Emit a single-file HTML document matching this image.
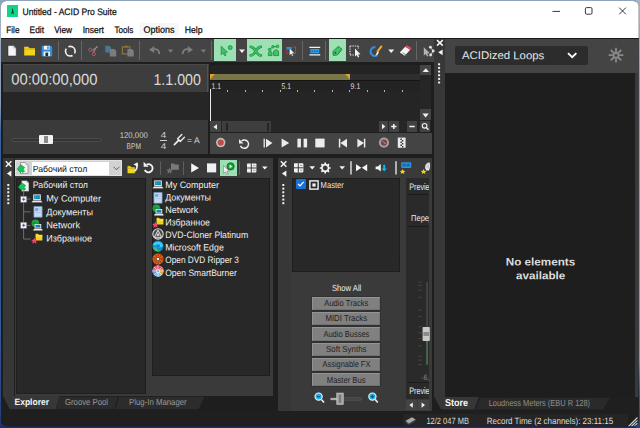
<!DOCTYPE html>
<html lang="en"><head><meta charset="utf-8"><title>Untitled - ACID Pro Suite</title>
<style>
html,body{margin:0;padding:0;}
body{width:640px;height:428px;overflow:hidden;background:#1e1e1e;font-family:"Liberation Sans","DejaVu Sans",sans-serif;}
#app{position:relative;width:640px;height:428px;overflow:hidden;background:linear-gradient(#a0b0c4,#8a9cb4 24%,#3a62a0 31%,#2c5590 48%,#34589a 78%,#26407c 97%,#1c2c6c);}
#app div,#app svg,#app span.t{position:absolute;}
#app span.t{left:0;top:0;white-space:nowrap;transform-origin:0 0;display:block;}
</style></head><body><div id="app">
<div style="left:0px;top:0px;width:640px;height:40px;background:linear-gradient(#8fa3bb,#a9b8c8);"></div>
<div style="left:636px;top:0px;width:4px;height:428px;background:linear-gradient(#a4b4c6,#8a9aac 20%,#8292a4 84%,#3a5a90 91%,#2a3f78);"></div>
<div id="win" style="left:0;top:0;width:640px;height:428px;clip-path:inset(1px 1.3px 1.7px 1px round 5.5px 5.5px 6px 6px);background:#1e1e1e">
<div style="left:0px;top:0px;width:640px;height:37.5px;background:#ffffff;"></div>
<div style="left:138.8px;top:23px;width:40.2px;height:13px;background:#f7f7f7;border-radius:2px;"></div>
<div style="left:7px;top:5.2px;width:11.2px;height:12px;background:#10d488;"></div>
<svg style="left:7px;top:5.2px;" width="11.2" height="12" viewBox="0 0 11.2 12"><path d="M5.6 2.6 L4.2 9.6 L5.6 8 L7 9.6 Z" fill="#0a3a2a"/></svg>
<span class="t" style="font-size:9.4px;line-height:9.4px;color:#111;transform:translate(22.50px,6.80px) rotate(0.03deg) scaleX(0.9126);-webkit-text-stroke:0.25px #111;">Untitled - ACID Pro Suite</span>
<svg style="left:540px;top:0px;" width="100" height="24" viewBox="0 0 100 24"><path d="M12.5 11.4h7.5" stroke="#222" stroke-width="0.9" fill="none"/><rect x="45.4" y="7.6" width="6.6" height="6.6" rx="1.2" stroke="#222" stroke-width="0.9" fill="none"/><path d="M79.200 7.600l6.700 6.700M85.900 7.600l-6.700 6.700" stroke="#222" stroke-width="0.9" fill="none"/></svg>
<span class="t" style="font-size:9.3px;line-height:9.3px;color:#111;transform:translate(6.20px,25.80px) rotate(0.03deg) scaleX(0.8875);-webkit-text-stroke:0.25px #111;">File</span>
<span class="t" style="font-size:9.3px;line-height:9.3px;color:#111;transform:translate(29.60px,25.80px) rotate(0.03deg) scaleX(0.8986);-webkit-text-stroke:0.25px #111;">Edit</span>
<span class="t" style="font-size:9.3px;line-height:9.3px;color:#111;transform:translate(54.20px,25.80px) rotate(0.03deg) scaleX(0.8904);-webkit-text-stroke:0.25px #111;">View</span>
<span class="t" style="font-size:9.3px;line-height:9.3px;color:#111;transform:translate(82.70px,25.80px) rotate(0.03deg) scaleX(0.9158);-webkit-text-stroke:0.25px #111;">Insert</span>
<span class="t" style="font-size:9.3px;line-height:9.3px;color:#111;transform:translate(114.40px,25.80px) rotate(0.03deg) scaleX(0.8751);-webkit-text-stroke:0.25px #111;">Tools</span>
<span class="t" style="font-size:9.3px;line-height:9.3px;color:#111;transform:translate(143.50px,25.80px) rotate(0.03deg) scaleX(0.9672);-webkit-text-stroke:0.25px #111;">Options</span>
<span class="t" style="font-size:9.3px;line-height:9.3px;color:#111;transform:translate(184.80px,25.80px) rotate(0.03deg) scaleX(0.9306);-webkit-text-stroke:0.25px #111;">Help</span>
<div style="left:0px;top:37.5px;width:640px;height:1.5px;background:#1a1a1a;"></div>
<div style="left:0px;top:39px;width:434.5px;height:23.4px;background:#444444;"></div>
<div style="left:214px;top:39.3px;width:22px;height:21.6px;background:#9de0b3;"></div>
<div style="left:247px;top:39.3px;width:35px;height:21.6px;background:#9de0b3;"></div>
<div style="left:328.7px;top:39.3px;width:17.4px;height:21.6px;background:#9de0b3;"></div>
<div style="left:58.0px;top:41.3px;width:1px;height:18.8px;background:#666;"></div>
<div style="left:80.9px;top:41.3px;width:1px;height:18.8px;background:#666;"></div>
<div style="left:138.9px;top:41.3px;width:1px;height:18.8px;background:#666;"></div>
<div style="left:211.0px;top:41.3px;width:1px;height:18.8px;background:#666;"></div>
<div style="left:302.0px;top:41.3px;width:1px;height:18.8px;background:#666;"></div>
<div style="left:325.0px;top:41.3px;width:1px;height:18.8px;background:#666;"></div>
<div style="left:415.8px;top:41.3px;width:1px;height:18.8px;background:#666;"></div>
<div style="left:434.2px;top:39px;width:11.1px;height:358px;background:#373737;"></div>
<div style="left:445.3px;top:39px;width:193.2px;height:33.7px;background:#444444;"></div>
<div style="left:455px;top:46.3px;width:132.8px;height:18.3px;background:#2c2c2c;border-radius:2px;"></div>
<span class="t" style="font-size:11.2px;line-height:11.2px;color:#e6e6e6;transform:translate(462.00px,50.10px) rotate(0.03deg) scaleX(1.0181);">ACIDized Loops</span>
<svg style="left:566px;top:50.3px;" width="12" height="10" viewBox="0 0 12 10"><path d="M2 3.2l4.2 4 4.2-4" stroke="#fff" stroke-width="1.8" fill="none"/></svg>
<svg style="left:607px;top:47px;" width="18" height="18" viewBox="0 0 18 18"><g transform="translate(9 8.2)" stroke="#8a8a8a" fill="none"><circle r="2.500" stroke-width="1.900"/><path d="M0-7.400v4.200M0 7.400v-4.200M-7.400 0h4.200M7.400 0h-4.200M-5.200-5.200l2.900 2.900M5.200 5.200l-2.900-2.900M-5.200 5.200l2.900-2.900M5.200-5.200l-2.900 2.900" stroke-width="1.800"/></g></svg>
<div style="left:445.3px;top:72.7px;width:190.2px;height:324px;background:#1e1e1e;"></div>
<div style="left:634.9px;top:72.7px;width:2.9px;height:324px;background:#393939;"></div>
<span class="t" style="font-size:10.9px;line-height:10.9px;color:#dcdcdc;font-weight:bold;transform:translate(505.70px,256.50px) rotate(0.03deg) scaleX(1.0738);">No elements</span>
<span class="t" style="font-size:10.9px;line-height:10.9px;color:#dcdcdc;font-weight:bold;transform:translate(516.00px,270.30px) rotate(0.03deg) scaleX(1.0726);">available</span>
<div style="left:2.7px;top:64.4px;width:206.3px;height:27.3px;background:#3d3d3d;box-shadow:inset 0 1px 0 #484848;"></div>
<div style="left:207.2px;top:65px;width:1px;height:26.7px;background:#525252;"></div>
<div style="left:2.7px;top:91.7px;width:206.2px;height:28.5px;background:#262626;"></div>
<div style="left:210px;top:92.4px;width:209.6px;height:29px;background:#252525;"></div>
<span class="t" style="font-size:15.7px;line-height:15.7px;color:#dadada;transform:translate(11.20px,71.60px) rotate(0.03deg) scaleX(0.9425);">00:00:00,000</span>
<span class="t" style="font-size:15.7px;line-height:15.7px;color:#dadada;transform:translate(153.40px,71.50px) rotate(0.03deg) scaleX(0.9087);">1.1.000</span>
<div style="left:209.8px;top:64.6px;width:209.8px;height:9.2px;background:#242424;"></div>
<div style="left:209.8px;top:73.8px;width:209.8px;height:6.3px;background:#2e2e2e;"></div>
<div style="left:209.8px;top:73.7px;width:139.8px;height:6.2px;background:#79774a;"></div>
<div style="left:209.8px;top:79.9px;width:209.8px;height:0.9px;background:#151515;"></div>
<div style="left:209.8px;top:80.8px;width:209.8px;height:11.6px;background:#232323;"></div>
<svg style="left:209.8px;top:73.8px;" width="6" height="6.4" viewBox="0 0 6 6.4"><path d="M0 0h5L0 5.4z" fill="#e0a030"/></svg>
<svg style="left:343.6px;top:73.8px;" width="6" height="6.4" viewBox="0 0 6 6.4"><path d="M1 0h5v5.4z" fill="#e0a030"/></svg>
<div style="left:209.8px;top:89.8px;width:1px;height:2px;background:#b4b4b4;"></div>
<div style="left:227.24px;top:89.8px;width:1px;height:2px;background:#b4b4b4;"></div>
<div style="left:244.68px;top:89.8px;width:1px;height:2px;background:#b4b4b4;"></div>
<div style="left:262.12px;top:89.8px;width:1px;height:2px;background:#b4b4b4;"></div>
<div style="left:279.56px;top:89.8px;width:1px;height:2px;background:#b4b4b4;"></div>
<div style="left:297.0px;top:89.8px;width:1px;height:2px;background:#b4b4b4;"></div>
<div style="left:314.44000000000005px;top:89.8px;width:1px;height:2px;background:#b4b4b4;"></div>
<div style="left:331.88px;top:89.8px;width:1px;height:2px;background:#b4b4b4;"></div>
<div style="left:349.32000000000005px;top:89.8px;width:1px;height:2px;background:#b4b4b4;"></div>
<div style="left:366.76px;top:89.8px;width:1px;height:2px;background:#b4b4b4;"></div>
<div style="left:384.20000000000005px;top:89.8px;width:1px;height:2px;background:#b4b4b4;"></div>
<div style="left:401.64px;top:89.8px;width:1px;height:2px;background:#b4b4b4;"></div>
<span class="t" style="font-size:8.2px;line-height:8.2px;color:#dcdcdc;transform:translate(211.50px,82.70px) rotate(0.03deg) scaleX(0.8334);">1.1</span>
<span class="t" style="font-size:8.2px;line-height:8.2px;color:#dcdcdc;transform:translate(281.60px,82.70px) rotate(0.03deg) scaleX(0.8246);">5.1</span>
<span class="t" style="font-size:8.2px;line-height:8.2px;color:#dcdcdc;transform:translate(350.60px,82.70px) rotate(0.03deg) scaleX(0.8509);">9.1</span>
<div style="left:209.9px;top:89.4px;width:1.2px;height:31.2px;background:#ececec;"></div>
<div style="left:420.2px;top:64.6px;width:10.8px;height:56px;background:#262626;"></div>
<div style="left:420.2px;top:64.8px;width:10.8px;height:10.4px;background:#444;"></div>
<div style="left:420.2px;top:109.4px;width:10.8px;height:10.8px;background:#444;"></div>
<svg style="left:420.3px;top:65.3px;" width="11.5" height="10" viewBox="0 0 11.5 10"><path d="M2.6 7h6.4L5.8 3.200z" fill="#f0f0f0"/></svg>
<svg style="left:420.3px;top:109.6px;" width="11" height="10.4" viewBox="0 0 11 10.4"><path d="M2.4 3.600h6.400L5.600 7.400z" fill="#f0f0f0"/></svg>
<div style="left:2.7px;top:120.2px;width:205.8px;height:33.8px;background:#3a3a3a;"></div>
<div style="left:12px;top:138.5px;width:89px;height:2.2px;background:#343434;box-shadow:0 0 0 0.6px #5c5c5c;border-radius:1px;"></div>
<div style="left:39px;top:134.7px;width:13.5px;height:9.6px;background:#f2f2f2;border-radius:1px;"></div>
<div style="left:43.6px;top:136.1px;width:4.4px;height:6.8px;background:#8a8a8a;"></div>
<span class="t" style="font-size:8.3px;line-height:8.3px;color:#d0d0d0;transform:translate(119.70px,131.00px) rotate(0.03deg) scaleX(0.9366);">120,000</span>
<span class="t" style="font-size:8.3px;line-height:8.3px;color:#d0d0d0;transform:translate(126.60px,141.90px) rotate(0.03deg) scaleX(0.7950);">BPM</span>
<span class="t" style="font-size:8.2px;line-height:8.2px;color:#d0d0d0;transform:translate(160.80px,131.70px) rotate(0.03deg) scaleX(1.2060);">4</span>
<span class="t" style="font-size:8.2px;line-height:8.2px;color:#d0d0d0;transform:translate(160.80px,143.00px) rotate(0.03deg) scaleX(1.2060);">4</span>
<div style="left:160px;top:140px;width:7px;height:0.9px;background:#d0d0d0;"></div>
<span class="t" style="font-size:8.8px;line-height:8.8px;color:#d8d8d8;transform:translate(187.00px,136.20px) rotate(0.03deg) scaleX(0.9716);">= A</span>
<svg style="left:173px;top:133.4px;" width="13" height="13" viewBox="0 0 13 13"><path d="M1.400 11.600L5.800 7.200" stroke="#ececec" stroke-width="1.700" fill="none" stroke-linecap="round"/><path d="M8.800 1.600L4.600 5.800l2.600 2.600 4.200-4.200" stroke="#ececec" stroke-width="1.400" fill="none" stroke-linecap="round" stroke-linejoin="round"/></svg>
<div style="left:210px;top:121.2px;width:221px;height:11.3px;background:#262626;"></div>
<div style="left:210.2px;top:121.2px;width:10.5px;height:10.8px;background:#444;"></div>
<div style="left:222px;top:121.2px;width:49px;height:10.8px;background:#3e3e3e;"></div>
<div style="left:226px;top:122.9px;width:1.8px;height:8px;background:#252525;"></div>
<div style="left:267px;top:122.9px;width:1.8px;height:8px;background:#252525;"></div>
<svg style="left:210px;top:121.2px;" width="10.6" height="11.4" viewBox="0 0 10.6 11.4"><path d="M7 3.200v5.400L3.400 5.900z" fill="#f0f0f0"/></svg>
<div style="left:379px;top:121.2px;width:8.6px;height:10.8px;background:#424242;"></div>
<div style="left:389.4px;top:121.2px;width:9.2px;height:10.8px;background:#424242;"></div>
<div style="left:407.3px;top:121.2px;width:9.899999999999999px;height:10.8px;background:#424242;"></div>
<div style="left:419.9px;top:121.2px;width:10.2px;height:10.8px;background:#424242;"></div>
<svg style="left:379px;top:121.4px;" width="9" height="11" viewBox="0 0 9 11"><path d="M3 2.800v5.400l3.400-2.700z" fill="#f0f0f0"/></svg>
<svg style="left:389.4px;top:121.4px;" width="10" height="11" viewBox="0 0 10 11"><path d="M2.200 5.500h5.200M4.800 2.900v5.200" stroke="#f0f0f0" stroke-width="1.5"/></svg>
<svg style="left:407.3px;top:121.4px;" width="10" height="11" viewBox="0 0 10 11"><path d="M2.400 5.500h5.400" stroke="#f0f0f0" stroke-width="1.5"/></svg>
<svg style="left:419.9px;top:121.4px;" width="11" height="11" viewBox="0 0 11 11"><circle cx="4.600" cy="4.800" r="2.300" stroke="#f0f0f0" stroke-width="1.100" fill="none"/><path d="M6.300 6.500l2.200 2.200" stroke="#f0f0f0" stroke-width="1.400"/></svg>
<div style="left:210px;top:133px;width:221.5px;height:20.8px;background:#444444;"></div>
<svg style="left:210px;top:133.2px;" width="221" height="20.6" viewBox="0 0 221 20.6">
<circle cx="10.7" cy="9.600" r="3.900" fill="#bc4c4a" stroke="#bcbcbc" stroke-width="1.700"/>
<path d="M31.500 8a4.200 4.200 0 1 1 -1 4.900" stroke="#ececec" stroke-width="1.500" fill="none"/><path d="M29 6v4.400h4.400z" fill="#ececec"/>
<path d="M54.200 5.800v8.800" stroke="#ececec" stroke-width="1.300"/><path d="M56 5.800v8.600l6.400-4.300z" fill="#ececec"/>
<path d="M71.600 5.600v8.900l7.600-4.450z" fill="#ececec"/>
<rect x="87.400" y="5.700" width="3.500" height="8.700" fill="#ececec"/><rect x="93.600" y="5.700" width="3.500" height="8.700" fill="#ececec"/>
<rect x="105.300" y="5.600" width="9.300" height="8.800" fill="#ececec"/>
<path d="M129.600 5.800v8.600" stroke="#ececec" stroke-width="1.500"/><path d="M137 5.800v8.600l-6.600-4.300z" fill="#ececec"/>
<path d="M154.600 5.800v8.600" stroke="#ececec" stroke-width="1.500"/><path d="M147.400 5.800v8.600l6.600-4.300z" fill="#ececec"/>
<circle cx="174" cy="9.600" r="4.100" fill="#7a4444" stroke="#a0a0a0" stroke-width="2"/><path d="M174 9.600l-1.600-1.800M174 9.600l1.800 1" stroke="#c4aaaa" stroke-width="0.800"/>
<rect x="187.800" y="4.600" width="7.800" height="10.200" fill="#ececec"/><path d="M190.400 5.400h1.500v1.500h-1.500zM191.900 6.900h1.500v1.500h-1.500zM190.400 8.400h1.500v1.500h-1.500zM191.900 9.900h1.500v1.500h-1.500zM190.400 11.400h1.500v1.500h-1.500zM191.900 12.900h1.500v1.500h-1.500z" fill="#333"/>
</svg>
<div style="left:3.2px;top:157.5px;width:11.3px;height:239px;background:#373737;"></div>
<div style="left:14.5px;top:157.5px;width:258.8px;height:238.8px;background:#3a3a3a;"></div>
<svg style="left:2.8px;top:157.5px;" width="12" height="60" viewBox="0 0 12 60"><path d="M2.800 3.300l5.600 5.400M8.400 3.300l-5.600 5.400" stroke="#f4f4f4" stroke-width="1.500"/><path d="M8.400 12.500v6.200L3.900 15.600z" fill="#f4f4f4"/><rect x="4.300" y="26.00" width="2" height="2" fill="#f0f0f0"/><rect x="4.300" y="29.64" width="2" height="2" fill="#f0f0f0"/><rect x="4.300" y="33.28" width="2" height="2" fill="#f0f0f0"/><rect x="4.300" y="36.92" width="2" height="2" fill="#f0f0f0"/><rect x="4.300" y="40.56" width="2" height="2" fill="#f0f0f0"/><rect x="4.300" y="44.20" width="2" height="2" fill="#f0f0f0"/></svg>
<div style="left:15px;top:160px;width:106.9px;height:16.1px;background:#d2d2d2;border-radius:1px;box-shadow:inset 0 0 0 0.8px #e6e6e6;"></div>
<div style="left:31.5px;top:162.3px;width:77.8px;height:12.3px;background:#ffffff;"></div>
<span class="t" style="font-size:8.9px;line-height:8.9px;color:#111;transform:translate(32.70px,164.90px) rotate(0.03deg) scaleX(0.9809);">Рабочий стол</span>
<svg style="left:110px;top:162.4px;" width="12" height="12" viewBox="0 0 12 12"><path d="M3.600 4.800l2.900 3 2.900-3" stroke="#555" stroke-width="0.900" fill="none"/></svg>
<svg style="left:17.2px;top:162.2px;" width="12" height="12" viewBox="0 0 12 12"><path d="M3.400 0.600h5.200l2.400 2.400v8.400H3.400z" fill="#f4f4f4" stroke="#555" stroke-width="0.500"/><path d="M8.600 0.600v2.400h2.400z" fill="#bdbdbd"/><path d="M3.800 2.800l3.800 2.600-1.400 2 1.400 1.800-2 1.200-1.200-1.200-1 1.200L0.200 7z" fill="#14c858" stroke="#0a7a30" stroke-width="0.500"/></svg>
<svg style="left:126px;top:159.6px;" width="150" height="16" viewBox="0 0 150 16">
<path d="M1.200 5.800h3.400l.8 1.200h3.800v6.600H1.200z" fill="#f2d41a" stroke="#2a2a2a" stroke-width="0.500"/><path d="M1.200 8.400h8" stroke="#b89a10" stroke-width="0.600"/>
<path d="M8.600 11c2.400-1.600 2.800-4.400 1.600-6.600" stroke="#f4f4f4" stroke-width="1.600" fill="none"/><path d="M7.400 4.600l4.200-2.400.6 4.400z" fill="#f4f4f4"/>
<path d="M20.600 4.600a4.100 4.100 0 1 1 -1.800 5.400" stroke="#f4f4f4" stroke-width="1.800" fill="none"/><path d="M17.600 1.800v5h5z" fill="#f4f4f4"/>
<path d="M34.500 1.400v13.500M57.500 1.400v13.500M113.500 1.400v13.500" stroke="#5e5e5e" stroke-width="1"/>
<path d="M45 3.400h3l.8 1h4v5.400H45z" fill="#7a7a7a"/><path d="M43.600 7.400l1 2.200 2.400.2-1.800 1.600.6 2.400-2.200-1.300-2.200 1.300.6-2.400-1.800-1.600 2.400-.2z" fill="#6e6e6e"/>
<path d="M65.200 3.200v9.400l7.800-4.700z" fill="#f4f4f4"/>
<rect x="81" y="3.400" width="9.200" height="9" fill="#f0f0f0"/>
<rect x="121" y="3.400" width="9.400" height="9.200" rx="0.800" fill="#f0f0f0"/><path d="M125.300 3.400v9.200M121 8h9.400" stroke="#3a3a3a" stroke-width="1"/><path d="M127 5.700h2.400M127 10.300h2.400" stroke="#777" stroke-width="0.700"/>
<path d="M136 6.400h5.600l-2.800 3.200z" fill="#f4f4f4"/>
</svg>
<div style="left:219.7px;top:159.6px;width:17.3px;height:16.8px;background:#9de0b3;"></div>
<svg style="left:219.7px;top:159.8px;" width="17.3" height="16.5" viewBox="0 0 17.3 16.5"><circle cx="10.600" cy="6.400" r="3.600" fill="#1fa03e" stroke="#0c5a22" stroke-width="0.800"/><path d="M9.600 4.600v3.600l2.800-1.800z" fill="#e8ffe8"/><path d="M3.400 5.400v8l2-1.600 1.200 2.600 1.400-.6-1.200-2.600 2.600-.2z" fill="#f2f2f2" stroke="#666" stroke-width="0.500"/></svg>
<div style="left:15.5px;top:178px;width:130.3px;height:216.2px;background:#282828;box-shadow:inset 0 0 0 0.8px #1c1c1c;"></div>
<div style="left:151.9px;top:178px;width:118.2px;height:197.8px;background:#282828;box-shadow:inset 0 0 0 0.8px #1c1c1c;"></div>
<svg style="left:17.6px;top:179.6px;" width="12" height="12" viewBox="0 0 12 12"><path d="M3.400 0.600h5.200l2.400 2.400v8.400H3.400z" fill="#f4f4f4" stroke="#222" stroke-width="0.500"/><path d="M8.600 0.600v2.400h2.400z" fill="#bdbdbd"/><path d="M3.800 2.800l3.800 2.600-1.400 2 1.400 1.800-2 1.200-1.200-1.200-1 1.200L0.200 7z" fill="#14c858" stroke="#0a7a30" stroke-width="0.500"/></svg>
<span class="t" style="font-size:9.3px;line-height:9.3px;color:#efefef;transform:translate(32.80px,180.90px) rotate(0.03deg) scaleX(0.9455);">Рабочий стол</span>
<svg style="left:16px;top:188px;" width="20" height="56" viewBox="0 0 20 56"><path d="M7.600 3v48M7.600 11h7M7.600 23.800h7M7.600 37.400h7M7.600 51h7" stroke="#7e7e7e" stroke-width="0.800" fill="none"/><rect x="4.700" y="8.300" width="6" height="6" fill="#f4f4f4" stroke="#777" stroke-width="0.500"/><path d="M6.100 11.300h3.200M7.700 9.700v3.200" stroke="#2a4ab0" stroke-width="0.900"/><rect x="4.700" y="34.300" width="6" height="6" fill="#f4f4f4" stroke="#777" stroke-width="0.500"/><path d="M6.100 37.300h3.200M7.700 35.700v3.200" stroke="#2a4ab0" stroke-width="0.900"/></svg>
<svg style="left:31.4px;top:192.6px;" width="12" height="12" viewBox="0 0 12 12"><rect x="2.200" y="1.400" width="7.600" height="5.600" fill="#e8e8e8"/><rect x="3.100" y="2.300" width="5.800" height="3.800" fill="#0e86b4"/><path d="M4.400 2.300v3.800M3.100 4.200h5.800" stroke="#2ac0e8" stroke-width="0.500"/><path d="M2 7.400h8l1.400 1.800H0.600z" fill="#f0f0f0"/><path d="M0.600 9.400h10.800" stroke="#888" stroke-width="0.500"/></svg>
<span class="t" style="font-size:9.3px;line-height:9.3px;color:#efefef;transform:translate(46.20px,194.60px) rotate(0.03deg) scaleX(0.9818);">My Computer</span>
<svg style="left:31.6px;top:206px;" width="12" height="12" viewBox="0 0 12 12"><rect x="1.600" y="0.200" width="8.800" height="11.400" rx="0.600" fill="#8fb2dc"/><rect x="2.500" y="1.100" width="7" height="9.600" fill="#c8daf0"/><rect x="3.200" y="2" width="3" height="3" fill="#7fa4d4"/><path d="M6.800 2.600h2.200M6.800 4.200h2.200M3.400 6.600h5.400" stroke="#9fbce0" stroke-width="0.700"/></svg>
<span class="t" style="font-size:9.3px;line-height:9.3px;color:#efefef;transform:translate(46.20px,208.20px) rotate(0.03deg) scaleX(0.9762);">Документы</span>
<svg style="left:31px;top:219.2px;" width="12" height="12" viewBox="0 0 12 12"><circle cx="4.400" cy="4.200" r="3.800" fill="#22aa44"/><path d="M0.800 4.200h7.200M4.400 0.600c-2 2-2 5.200 0 7.200" stroke="#127a2c" stroke-width="0.600" fill="none"/><rect x="3.600" y="5" width="6.600" height="4.400" fill="#e8e8e8"/><rect x="4.500" y="5.800" width="4.800" height="2.800" fill="#0e86b4"/><path d="M3 9.800h7.800l1 1.600H2z" fill="#f0f0f0"/></svg>
<span class="t" style="font-size:9.3px;line-height:9.3px;color:#efefef;transform:translate(46.20px,221.20px) rotate(0.03deg) scaleX(0.9910);">Network</span>
<svg style="left:31.2px;top:232.6px;" width="12" height="12" viewBox="0 0 12 12"><path d="M4.600 0.800h2.400l.8 1h3.600v5.800H4.600z" fill="#f2d41a"/><path d="M4.600 3h6.800" stroke="#fff08a" stroke-width="0.700"/><path d="M3.400 4.600l1 2.100 2.300.2-1.700 1.600.5 2.300-2.100-1.200-2.100 1.200.5-2.300L0.100 6.900l2.300-.2z" fill="#e8486a"/></svg>
<span class="t" style="font-size:9.3px;line-height:9.3px;color:#efefef;transform:translate(46.20px,234.60px) rotate(0.03deg) scaleX(0.9717);">Избранное</span>
<span class="t" style="font-size:9.3px;line-height:9.3px;color:#efefef;transform:translate(165.20px,181.10px) rotate(0.03deg) scaleX(0.9639);">My Computer</span>
<svg style="left:152.2px;top:179.29999999999998px;" width="12" height="12" viewBox="0 0 12 12"><rect x="2.200" y="1.400" width="7.600" height="5.600" fill="#e8e8e8"/><rect x="3.100" y="2.300" width="5.800" height="3.800" fill="#0e86b4"/><path d="M4.400 2.300v3.800M3.100 4.200h5.800" stroke="#2ac0e8" stroke-width="0.500"/><path d="M2 7.400h8l1.400 1.800H0.600z" fill="#f0f0f0"/><path d="M0.600 9.400h10.800" stroke="#888" stroke-width="0.500"/></svg>
<span class="t" style="font-size:9.3px;line-height:9.3px;color:#efefef;transform:translate(165.20px,193.59px) rotate(0.03deg) scaleX(0.9553);">Документы</span>
<svg style="left:152.2px;top:191.79px;" width="12" height="12" viewBox="0 0 12 12"><rect x="1.600" y="0.200" width="8.800" height="11.400" rx="0.600" fill="#8fb2dc"/><rect x="2.500" y="1.100" width="7" height="9.600" fill="#c8daf0"/><rect x="3.200" y="2" width="3" height="3" fill="#7fa4d4"/><path d="M6.800 2.600h2.200M6.800 4.200h2.200M3.400 6.600h5.400" stroke="#9fbce0" stroke-width="0.700"/></svg>
<span class="t" style="font-size:9.3px;line-height:9.3px;color:#efefef;transform:translate(165.20px,206.08px) rotate(0.03deg) scaleX(0.9675);">Network</span>
<svg style="left:152.2px;top:204.27999999999997px;" width="12" height="12" viewBox="0 0 12 12"><circle cx="4.400" cy="4.200" r="3.800" fill="#22aa44"/><path d="M0.800 4.200h7.200M4.400 0.600c-2 2-2 5.200 0 7.200" stroke="#127a2c" stroke-width="0.600" fill="none"/><rect x="3.600" y="5" width="6.600" height="4.400" fill="#e8e8e8"/><rect x="4.500" y="5.800" width="4.800" height="2.800" fill="#0e86b4"/><path d="M3 9.800h7.800l1 1.600H2z" fill="#f0f0f0"/></svg>
<span class="t" style="font-size:9.3px;line-height:9.3px;color:#efefef;transform:translate(165.20px,218.57px) rotate(0.03deg) scaleX(0.9505);">Избранное</span>
<svg style="left:152.2px;top:216.76999999999998px;" width="12" height="12" viewBox="0 0 12 12"><path d="M4.600 0.800h2.400l.8 1h3.600v5.800H4.600z" fill="#f2d41a"/><path d="M4.600 3h6.800" stroke="#fff08a" stroke-width="0.700"/><path d="M3.400 4.600l1 2.100 2.300.2-1.700 1.600.5 2.300-2.100-1.200-2.100 1.200.5-2.300L0.100 6.900l2.300-.2z" fill="#e8486a"/></svg>
<span class="t" style="font-size:9.3px;line-height:9.3px;color:#efefef;transform:translate(165.20px,231.06px) rotate(0.03deg) scaleX(0.9336);">DVD-Cloner Platinum</span>
<svg style="left:152.2px;top:227.96px;" width="12" height="12" viewBox="0 0 12 12"><circle cx="6" cy="6" r="5.200" fill="#484848" stroke="#d8d8d8" stroke-width="1.100"/><path d="M6 2L2.400 9.200c2 1 5.200 1 7.200 0z" fill="#6a6a6a" stroke="#ececec" stroke-width="0.900"/><circle cx="6" cy="6.800" r="1.200" fill="#d0d0d0"/></svg>
<span class="t" style="font-size:9.3px;line-height:9.3px;color:#efefef;transform:translate(165.20px,243.55px) rotate(0.03deg) scaleX(0.9447);">Microsoft Edge</span>
<svg style="left:152.2px;top:240.45000000000002px;" width="12" height="12" viewBox="0 0 12 12"><circle cx="6" cy="6" r="5.500" fill="#1488d8"/><path d="M0.800 7.600a5.400 5.400 0 0 0 8.600 2.600c-3 .8-5.200-1-4.800-3.200z" fill="#35c46a"/><path d="M3.400 6.200c.2-2 3.600-2.600 4.600-.6.400 1.200-.8 1.800-1.600 1.600 1 .8 4 .4 4.600-1.600A5.500 5.500 0 0 0 .6 5.400c.8-.6 2-.4 2.800.8z" fill="#3ad0f0"/></svg>
<span class="t" style="font-size:9.3px;line-height:9.3px;color:#efefef;transform:translate(165.20px,256.04px) rotate(0.03deg) scaleX(0.8923);">Open DVD Ripper 3</span>
<svg style="left:152.2px;top:252.93999999999997px;" width="12" height="12" viewBox="0 0 12 12"><circle cx="6" cy="6" r="5.500" fill="#e8681a"/><circle cx="6" cy="6" r="3.600" fill="none" stroke="#a83c0c" stroke-width="2.400" stroke-dasharray="1.300 1"/><circle cx="6" cy="6" r="1.700" fill="#f4f4f4" stroke="#5a2408" stroke-width="0.700"/></svg>
<span class="t" style="font-size:9.3px;line-height:9.3px;color:#efefef;transform:translate(165.20px,268.53px) rotate(0.03deg) scaleX(0.9173);">Open SmartBurner</span>
<svg style="left:152.2px;top:265.42999999999995px;" width="12" height="12" viewBox="0 0 12 12"><circle cx="6" cy="6" r="5.500" fill="#e8e8f8"/><path d="M6 6L6 0.500A5.500 5.500 0 0 1 11 3.600z" fill="#e8486a"/><path d="M6 6L11 3.600A5.500 5.500 0 0 1 10 9.800z" fill="#f0a030"/><path d="M6 6L10 9.800A5.500 5.500 0 0 1 3 10.600z" fill="#6ad0f4"/><path d="M6 6L3 10.600A5.500 5.500 0 0 1 0.600 5z" fill="#7a8af0"/><path d="M6 6L0.600 5A5.500 5.500 0 0 1 6 0.500z" fill="#f05a8a"/><path d="M6 0.500v11M0.500 6h11M2.100 2.100l7.800 7.800M9.900 2.100l-7.800 7.800" stroke="#f4f4fa" stroke-width="0.600"/><circle cx="6" cy="6" r="1.700" fill="#fff"/><circle cx="6" cy="6" r="0.800" fill="#444"/></svg>
<svg style="left:2px;top:396px;" width="275" height="14" viewBox="0 0 275 14"><path d="M1.200 0h56.800l-4.400 13.300H7.600z" fill="#373737"/><path d="M58 0.800h58.500l-4.400 12.400H53.900z" fill="#2b2b2b"/><path d="M117 0.800h85.500l-6 12.400h-84z" fill="#2c2c2c"/><path d="M116.800 0.800l-4.200 12.400" stroke="#1e1e1e" stroke-width="1"/></svg>
<span class="t" style="font-size:9.1px;line-height:9.1px;color:#f6f6f6;font-weight:bold;transform:translate(14.50px,398.10px) rotate(0.03deg) scaleX(0.9344);">Explorer</span>
<span class="t" style="font-size:8.8px;line-height:8.8px;color:#9a9a9a;transform:translate(65.00px,398.10px) rotate(0.03deg) scaleX(0.8790);">Groove Pool</span>
<span class="t" style="font-size:8.8px;line-height:8.8px;color:#9a9a9a;transform:translate(129.00px,398.10px) rotate(0.03deg) scaleX(0.8869);">Plug-In Manager</span>
<div style="left:278px;top:157.5px;width:13px;height:253.3px;background:#373737;"></div>
<div style="left:291px;top:157.5px;width:141.3px;height:253.4px;background:#3a3a3a;"></div>
<svg style="left:278.2px;top:157.5px;" width="12" height="60" viewBox="0 0 12 60"><path d="M2.800 3.300l5.600 5.400M8.400 3.300l-5.600 5.400" stroke="#f4f4f4" stroke-width="1.500"/><path d="M8.400 12.500v6.200L3.900 15.600z" fill="#f4f4f4"/><rect x="4.300" y="26.00" width="2" height="2" fill="#f0f0f0"/><rect x="4.300" y="29.64" width="2" height="2" fill="#f0f0f0"/><rect x="4.300" y="33.28" width="2" height="2" fill="#f0f0f0"/><rect x="4.300" y="36.92" width="2" height="2" fill="#f0f0f0"/><rect x="4.300" y="40.56" width="2" height="2" fill="#f0f0f0"/><rect x="4.300" y="44.20" width="2" height="2" fill="#f0f0f0"/></svg>
<svg style="left:291px;top:159.1px;" width="140" height="17" viewBox="0 0 140 17">
<rect x="3" y="4.200" width="9.400" height="9.200" rx="0.800" fill="#f0f0f0"/><path d="M7.300 4.200v9.200M3 8.800h9.400" stroke="#3a3a3a" stroke-width="1"/><path d="M9 6.500h2.400M9 11.100h2.400" stroke="#777" stroke-width="0.700"/>
<path d="M18.400 7.200h5.600l-2.800 3.200z" fill="#f4f4f4"/>
<g transform="translate(34.200 9)"><circle r="3.300" fill="none" stroke="#f4f4f4" stroke-width="1.700"/><path d="M0-5.400v2M0 5.400v-2M-5.400 0h2M5.400 0h-2M-3.800-3.800l1.400 1.400M3.800 3.800l-1.400-1.400M-3.800 3.800l1.400-1.400M3.800-3.800l-1.400 1.400" stroke="#f4f4f4" stroke-width="1.700"/></g>
<path d="M48.400 7.200h5.600l-2.800 3.200z" fill="#f4f4f4"/>
<path d="M60 2.200v13.400M105 2.200v13.400" stroke="#d8d8d8" stroke-width="1.500"/>
<path d="M65 5.300v7l5.400-3.500zM76.200 5.300v7l-5.400-3.500z" fill="#f4f4f4"/>
<path d="M84.600 7.400h2.200l3-2.400v7.600l-3-2.400h-2.200z" fill="#f4f4f4"/><path d="M93.200 5.800v4.400" stroke="#1cb0ec" stroke-width="2"/><path d="M90.600 9.400h5.200l-2.600 3.200z" fill="#1cb0ec"/>
<rect x="110.200" y="3.300" width="10" height="5.600" rx="0.800" fill="#2a96e0"/><rect x="111.400" y="4.600" width="3.400" height="3" fill="#1a6ab0"/><rect x="115.600" y="4.600" width="3.400" height="3" fill="#1a6ab0"/><path d="M111.600 10l.9 1.700 1.900.2-1.400 1.300.4 1.900-1.800-1-1.800 1 .4-1.900-1.400-1.300 1.900-.2z" fill="#f4d020"/>
<path d="M132.600 10l.9 1.700 1.900.2-1.400 1.300.4 1.900-1.800-1-1.800 1 .4-1.900-1.400-1.300 1.900-.2z" fill="#f4d020"/><path d="M134.200 9.600c-.6-3.600 1.400-6 4.400-6 .8 2.600.6 5.400-.6 7.800l-2.600.2z" fill="#e8e8e8"/><path d="M136 5.400v4M137.400 4.800v4.400" stroke="#9a9a9a" stroke-width="0.500"/>
</svg>
<div style="left:292px;top:178.2px;width:107.6px;height:93.4px;background:#282828;box-shadow:inset 0 0 0 0.8px #1c1c1c;"></div>
<div style="left:296px;top:179.4px;width:9.5px;height:9.5px;background:#1670d8;border-radius:1px;"></div>
<svg style="left:296px;top:179.4px;" width="9.5" height="9.5" viewBox="0 0 9.5 9.5"><path d="M2 4.800l2 2 3.600-4" stroke="#fff" stroke-width="1.200" fill="none"/></svg>
<svg style="left:308.6px;top:179.6px;" width="10" height="10" viewBox="0 0 10 10"><rect x="0.900" y="0.900" width="8.200" height="8.200" fill="none" stroke="#f2f2f2" stroke-width="1.400"/><rect x="3.400" y="3.400" width="3.200" height="3.200" fill="#f2f2f2"/></svg>
<span class="t" style="font-size:8.7px;line-height:8.7px;color:#e4e4e4;transform:translate(320.60px,181.20px) rotate(0.03deg) scaleX(0.8725);">Master</span>
<span class="t" style="font-size:8.9px;line-height:8.9px;color:#ececec;transform:translate(331.90px,283.90px) rotate(0.03deg) scaleX(0.8642);">Show All</span>
<div style="left:312.2px;top:296.8px;width:67.5px;height:13.2px;background:#808080;box-shadow:inset 0.7px 0.7px 0 #9a9a9a, inset -0.7px -0.7px 0 #6e6e6e, 0 0 0 0.6px #2c2c2c;"></div>
<span class="t" style="font-size:8.7px;line-height:8.7px;color:#222;transform:translate(324.30px,299.10px) rotate(0.03deg) scaleX(0.8769);">Audio Tracks</span>
<div style="left:312.2px;top:312.1px;width:67.5px;height:13.2px;background:#808080;box-shadow:inset 0.7px 0.7px 0 #9a9a9a, inset -0.7px -0.7px 0 #6e6e6e, 0 0 0 0.6px #2c2c2c;"></div>
<span class="t" style="font-size:8.7px;line-height:8.7px;color:#222;transform:translate(325.40px,314.40px) rotate(0.03deg) scaleX(0.9008);">MIDI Tracks</span>
<div style="left:312.2px;top:327.40000000000003px;width:67.5px;height:13.2px;background:#808080;box-shadow:inset 0.7px 0.7px 0 #9a9a9a, inset -0.7px -0.7px 0 #6e6e6e, 0 0 0 0.6px #2c2c2c;"></div>
<span class="t" style="font-size:8.7px;line-height:8.7px;color:#222;transform:translate(323.40px,329.70px) rotate(0.03deg) scaleX(0.8647);">Audio Busses</span>
<div style="left:312.2px;top:342.70000000000005px;width:67.5px;height:13.2px;background:#808080;box-shadow:inset 0.7px 0.7px 0 #9a9a9a, inset -0.7px -0.7px 0 #6e6e6e, 0 0 0 0.6px #2c2c2c;"></div>
<span class="t" style="font-size:8.7px;line-height:8.7px;color:#222;transform:translate(326.00px,345.00px) rotate(0.03deg) scaleX(0.9126);">Soft Synths</span>
<div style="left:312.2px;top:358.0px;width:67.5px;height:13.2px;background:#808080;box-shadow:inset 0.7px 0.7px 0 #9a9a9a, inset -0.7px -0.7px 0 #6e6e6e, 0 0 0 0.6px #2c2c2c;"></div>
<span class="t" style="font-size:8.7px;line-height:8.7px;color:#222;transform:translate(322.60px,360.30px) rotate(0.03deg) scaleX(0.8521);">Assignable FX</span>
<div style="left:312.2px;top:373.3px;width:67.5px;height:13.2px;background:#808080;box-shadow:inset 0.7px 0.7px 0 #9a9a9a, inset -0.7px -0.7px 0 #6e6e6e, 0 0 0 0.6px #2c2c2c;"></div>
<span class="t" style="font-size:8.7px;line-height:8.7px;color:#222;transform:translate(326.80px,375.60px) rotate(0.03deg) scaleX(0.8819);">Master Bus</span>
<svg style="left:313px;top:389.6px;" width="68" height="16" viewBox="0 0 68 16">
<circle cx="5.600" cy="6.600" r="3.600" fill="#1ab0e8" stroke="#f0f0f0" stroke-width="1.200"/><path d="M8.400 9.600l2.600 3" stroke="#f0f0f0" stroke-width="1.600"/><path d="M3.800 6.600h3.600" stroke="#0a4a6a" stroke-width="0.900"/>
<rect x="17.400" y="7.900" width="31.200" height="2.200" rx="1" fill="#3a3a3a" stroke="#666" stroke-width="0.700"/><path d="M17.600 9h6.400" stroke="#d0d0d0" stroke-width="1.400"/>
<rect x="23.800" y="3.100" width="6.400" height="11.200" fill="#a4a4a4" stroke="#cfcfcf" stroke-width="0.700"/><rect x="25.800" y="4.600" width="2.400" height="8.200" fill="#7a7a7a"/>
<circle cx="59.400" cy="6.600" r="3.600" fill="#1ab0e8" stroke="#f0f0f0" stroke-width="1.200"/><path d="M62.200 9.600l2.600 3" stroke="#f0f0f0" stroke-width="1.600"/><path d="M57.600 6.600h3.600M59.400 4.800v3.600" stroke="#0a4a6a" stroke-width="0.900"/>
</svg>
<div style="left:406.4px;top:178.2px;width:22.8px;height:220.4px;background:#2a2a2a;"></div>
<div style="left:406.6px;top:194.1px;width:22.6px;height:1px;background:#1c1c1c;"></div>
<div style="left:406.6px;top:226.2px;width:22.6px;height:1px;background:#1c1c1c;"></div>
<div style="left:406.6px;top:382.2px;width:22.6px;height:1px;background:#1c1c1c;"></div>
<div style="left:406.600px;top:178px;width:22.600px;height:232px;overflow:hidden;">
<span class="t" style="font-size:9.5px;line-height:9.5px;color:#e8e8e8;transform:translate(2.20px,4.20px) rotate(0.03deg) scaleX(0.7576);">Preview</span>
<span class="t" style="font-size:8.7px;line-height:8.7px;color:#e8e8e8;transform:translate(4.10px,36.20px) rotate(0.03deg) scaleX(0.8614);">Перед</span>
<span class="t" style="font-size:7.8px;line-height:7.8px;color:#8c8c8c;transform:translate(14.50px,195.60px) rotate(0.03deg) scaleX(0.8333);">-6,0</span>
<span class="t" style="font-size:9.5px;line-height:9.5px;color:#e8e8e8;transform:translate(2.20px,208.00px) rotate(0.03deg) scaleX(0.7576);">Preview</span>
</div>
<svg style="left:406.6px;top:270.6px;" width="23" height="112" viewBox="0 0 23 112"><path d="M11.400 11h3.400" stroke="#4c4c4c" stroke-width="0.800"/><path d="M11.400 14.6h3.400" stroke="#4c4c4c" stroke-width="0.800"/><path d="M11.400 19.2h3.400" stroke="#4c4c4c" stroke-width="0.800"/><path d="M11.400 26.2h3.400" stroke="#4c4c4c" stroke-width="0.800"/><path d="M11.400 39h3.400" stroke="#4c4c4c" stroke-width="0.800"/><path d="M11.400 45.6h3.400" stroke="#4c4c4c" stroke-width="0.800"/><path d="M11.400 55.7h3.400" stroke="#4c4c4c" stroke-width="0.800"/><path d="M11.400 61.8h3.400" stroke="#4c4c4c" stroke-width="0.800"/><path d="M11.400 67.8h3.400" stroke="#4c4c4c" stroke-width="0.800"/><path d="M11.400 74.8h3.400" stroke="#4c4c4c" stroke-width="0.800"/><path d="M11.400 85.2h3.400" stroke="#4c4c4c" stroke-width="0.800"/><path d="M11.400 89.1h3.400" stroke="#4c4c4c" stroke-width="0.800"/><path d="M11.400 93.7h3.400" stroke="#4c4c4c" stroke-width="0.800"/><rect x="19.300" y="11" width="1.500" height="59" fill="#4a4a4a"/><rect x="19.300" y="70" width="1.500" height="23.800" fill="#4e7a52"/><rect x="15.600" y="56" width="7.200" height="14" rx="0.800" fill="#c8c8c8"/><rect x="16.400" y="61" width="5.600" height="4" fill="#8a8a8a"/></svg>
<div style="left:406.4px;top:399.6px;width:10.8px;height:10px;background:#444;"></div>
<div style="left:418.4px;top:399.6px;width:10.8px;height:10px;background:#444;"></div>
<svg style="left:406.4px;top:399.6px;" width="23" height="10" viewBox="0 0 23 10"><path d="M6.800 2.400v5.400L3.400 5.100zM15.600 2.400v5.400l3.400-2.700z" fill="#f2f2f2"/></svg>
<div style="left:445.3px;top:396.7px;width:193.5px;height:14.3px;background:#1f1f1f;"></div>
<svg style="left:434px;top:396.5px;" width="204" height="14" viewBox="0 0 204 14"><path d="M0.400 0h44.400l-4.600 12.600H7z" fill="#373737"/><path d="M46 1h129.600l-6.400 11.600H41.600z" fill="#2a2a2a"/></svg>
<span class="t" style="font-size:10px;line-height:10px;color:#f6f6f6;font-weight:bold;transform:translate(445.00px,397.80px) rotate(0.03deg) scaleX(0.8998);">Store</span>
<span class="t" style="font-size:8.8px;line-height:8.8px;color:#8e8e8e;transform:translate(488.70px,398.50px) rotate(0.03deg) scaleX(0.8462);">Loudness Meters (EBU R 128)</span>
<div style="left:0px;top:411px;width:640px;height:17px;background:#1f1f1f;"></div>
<div style="left:403px;top:414.4px;width:225.3px;height:13px;background:#252525;"></div>
<svg style="left:404px;top:414.8px;" width="13" height="10" viewBox="0 0 13 10"><path d="M1.600 5.800L8 2.200l3.600 2.400-6.400 3.800z" fill="#a8a8a8"/><path d="M1.600 5.800v1.400l3.600 2.600V8.400z" fill="#6a6a6a"/><path d="M5.200 8.400v1.400l6.400-3.800V4.600z" fill="#4a4a4a"/></svg>
<span class="t" style="font-size:9px;line-height:9px;color:#dcdcdc;transform:translate(426.40px,416.60px) rotate(0.03deg) scaleX(0.8347);">12/2 047 MB</span>
<span class="t" style="font-size:9px;line-height:9px;color:#dcdcdc;transform:translate(486.80px,416.60px) rotate(0.03deg) scaleX(0.8869);">Record Time (2 channels): 23:11:15</span>
<svg style="left:627px;top:415.6px;" width="12" height="11" viewBox="0 0 12 11"><path d="M1.500 10.500l9-9M4.300 10.500l6.200-6.200M7.100 10.500l3.400-3.400" stroke="#d0d0d0" stroke-width="1.100"/></svg>
<svg style="left:0px;top:38.8px;" width="440" height="24" viewBox="0 0 440 24">
<path d="M8 6.600h5.400l2.800 2.800v7.600H8z" fill="#f4f4f4" stroke="#2a2a2a" stroke-width="0.500"/><path d="M13.400 6.600v2.800h2.800z" fill="#b4b4b4"/>
<path d="M24.200 7.800h4.200l1 1.400h5.600v7.400H24.200z" fill="#f2d21c"/><path d="M24.200 10.200h10.800" stroke="#c8a80c" stroke-width="0.600"/>
<path d="M41.600 6.800h9.400l1.200 1.200v9.200H41.600z" fill="#2f8fdc"/><rect x="43.800" y="6.800" width="5.800" height="3.800" fill="#f4f4f4"/><rect x="47.200" y="7.300" width="1.500" height="2.700" fill="#2f8fdc"/><rect x="43.600" y="12.600" width="6.400" height="4.600" fill="#f4f4f4"/><rect x="45.400" y="13.600" width="2.800" height="3.600" fill="#2a2a2a"/>
<circle cx="70.300" cy="12.200" r="4.800" fill="none" stroke="#f4f4f4" stroke-width="1.600" stroke-dasharray="12.400 2.700" stroke-dashoffset="-5"/>
<g fill="none"><path d="M92 11.400l5.800-3.600M93.400 13.400l3.400-6.200" stroke="#8a8a8a" stroke-width="1.100"/><circle cx="90.400" cy="10.800" r="1.600" stroke="#b45a68" stroke-width="1"/><circle cx="93.800" cy="15" r="1.600" stroke="#b45a68" stroke-width="1"/></g>
<path d="M105.200 6.800h4.200l1.600 1.600v5h-5.800z" fill="#457799"/><path d="M109.800 10h4.600l1.800 1.800v5.600h-6.400z" fill="#7c7c7c"/>
<path d="M122.400 7.800h7.400v7h-7.400z" fill="none" stroke="#8a7436" stroke-width="1.200"/><rect x="124.600" y="6.600" width="3" height="2" fill="#8a7436"/><path d="M127.400 10h4.600l1.800 1.800v5.600h-6.400z" fill="#7c7c7c"/>
<path d="M153.400 10.300c3.600-.9 6.200 1.500 5.700 4.700" stroke="#7c7c7c" stroke-width="1.900" fill="none"/><path d="M149 10.700l5.200-3.700v6.900z" fill="#7c7c7c"/>
<path d="M167.800 10.600h5.600l-2.800 3.200z" fill="#787878"/>
<path d="M188.600 10.300c-3.600-.9-6.200 1.500-5.700 4.700" stroke="#7c7c7c" stroke-width="1.900" fill="none"/><path d="M193 10.700l-5.200-3.700v6.900z" fill="#7c7c7c"/>
<path d="M200.600 10.600h5.600l-2.800 3.200z" fill="#787878"/>
<path d="M221.200 7.200v8.600l2.100-1.700 1.300 2.700 1.500-.7-1.300-2.700 2.700-.3z" fill="#3ec466" stroke="#1c8a40" stroke-width="0.700"/><circle cx="230.200" cy="8.600" r="2" fill="#3ec466" stroke="#1c8a40" stroke-width="0.800"/>
<path d="M239 10.600h6l-3 3.400z" fill="#f4f4f4"/>
<path d="M250.800 7.800c5 0 5 8.600 10 8.600M250.800 16.400c5 0 5-8.600 10-8.600" stroke="#1c8a40" stroke-width="2.800" fill="none" stroke-linecap="round"/><path d="M250.800 7.800c5 0 5 8.600 10 8.600M250.800 16.400c5 0 5-8.600 10-8.600" stroke="#3ec466" stroke-width="1.500" fill="none" stroke-linecap="round"/>
<path d="M268.400 16.600v-2.600c0-2.200 3.600-2.200 3.600 0v2.600zM273.600 16.600v-3.600c0-2.800 5-2.800 5 0v3.600z" fill="#3ec466" stroke="#1c8a40" stroke-width="0.800"/><path d="M269.600 10.400l3.400-2.600 4.600-.4" stroke="#1c8a40" stroke-width="0.900" fill="none"/><circle cx="269.600" cy="10.600" r="1.400" fill="#3ec466" stroke="#1c8a40" stroke-width="0.700"/><circle cx="273" cy="7.800" r="1.300" fill="#3ec466" stroke="#1c8a40" stroke-width="0.700"/><circle cx="277.400" cy="7.400" r="1.400" fill="#3ec466" stroke="#1c8a40" stroke-width="0.700"/>
<path d="M286.400 8h5.400v2.400h-5.400z" fill="#2f8fdc"/><path d="M286.800 10.400v4.200h2" stroke="#a83a3a" stroke-width="1" fill="none"/><path d="M293.600 8h2v6.600h-2" stroke="#c04444" stroke-width="1" fill="none"/><path d="M289.400 9v7.400l1.700-1.400 1 2.200 1.200-.5-1-2.200 2.200-.3z" fill="#f4f4f4" stroke="#444" stroke-width="0.400"/>
<path d="M309.400 8.400h10.800M309.400 15.800h10.800" stroke="#f4f4f4" stroke-width="1.300"/><rect x="310.400" y="10" width="8.800" height="4.200" fill="#2f9fe8"/><path d="M311.600 12.100h6.400" stroke="#0a4a8a" stroke-width="0.900" stroke-dasharray="1.600 0.800"/>
<path d="M333 12.400l5.400-5 3.600 2.800-4.400 5.600-4.400.6z" fill="#3ec466" stroke="#1c7a3a" stroke-width="0.900"/><circle cx="335.400" cy="13.800" r="0.800" fill="#0c3a18"/>
<path d="M350 7h8.200M350 7v9M350 16h4M358.200 7v3" stroke="#e4e4e4" stroke-width="1.100" stroke-dasharray="1.400 1" fill="none"/><path d="M355 9.600v8l1.800-1.500 1.100 2.400 1.300-.6-1.100-2.400 2.400-.3z" fill="#f4f4f4"/>
<path d="M375.400 8.200a4.400 4.400 0 1 0 2 8" stroke="#2f8fdc" stroke-width="2.200" fill="none"/><path d="M381.800 6.800l-4.600 6" stroke="#e8b030" stroke-width="2"/><path d="M377.400 12.600l-2 3.800 1.800-.4 1.800-2.400z" fill="#f4f4f4"/>
<path d="M388.200 10.600h6l-3 3.400z" fill="#f4f4f4"/>
<path d="M399.800 13.600l5.400-5.800 5 3-5.400 6z" fill="#f4f4f4"/><path d="M405.200 7.800l1.600-1.600 5 2.800-1.600 1.800z" fill="#e84a5a"/><path d="M402.600 13.800l4 2.400" stroke="#666" stroke-width="0.800"/>
<path d="M423.800 8.200v8.400l2-1.600 1.200 2.600 1.400-.6-1.200-2.600 2.600-.2z" fill="#b4b4b4"/><circle cx="430.400" cy="8.200" r="1.400" fill="#e4e4e4"/><circle cx="433.200" cy="12" r="1.400" fill="#e4e4e4"/><circle cx="430.600" cy="16" r="1.400" fill="#e4e4e4"/><path d="M430.400 8.200l2.800 3.800-2.600 4" stroke="#e4e4e4" stroke-width="0.700" fill="none"/>
</svg>
<svg style="left:434.7px;top:37.9px;" width="11" height="60" viewBox="0 0 11 60"><path d="M2 2.100l5.800 5.500M7.800 2.100l-5.800 5.500" stroke="#f4f4f4" stroke-width="1.500"/><path d="M7.600 11.400v5.800L3.200 14.300z" fill="#f4f4f4"/><rect x="3.100" y="25.30" width="2" height="2" fill="#f0f0f0"/><rect x="3.100" y="28.94" width="2" height="2" fill="#f0f0f0"/><rect x="3.100" y="32.58" width="2" height="2" fill="#f0f0f0"/><rect x="3.100" y="36.22" width="2" height="2" fill="#f0f0f0"/><rect x="3.100" y="39.86" width="2" height="2" fill="#f0f0f0"/><rect x="3.100" y="43.50" width="2" height="2" fill="#f0f0f0"/></svg>
</div>
</div></body></html>
